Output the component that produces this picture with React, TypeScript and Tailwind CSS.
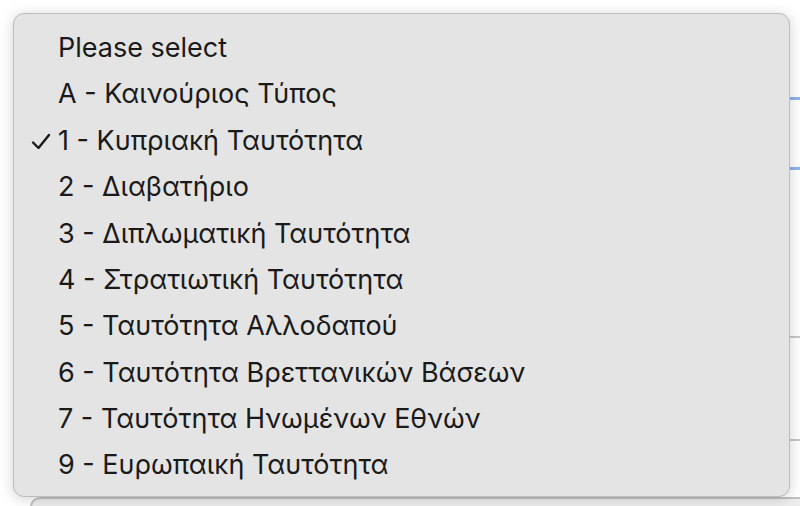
import React from "react";

const items = [
  "Please select",
  "A - Καινούριος Τύπος",
  "1 - Κυπριακή Ταυτότητα",
  "2 - Διαβατήριο",
  "3 - Διπλωματική Ταυτότητα",
  "4 - Στρατιωτική Ταυτότητα",
  "5 - Ταυτότητα Αλλοδαπού",
  "6 - Ταυτότητα Βρεττανικών Βάσεων",
  "7 - Ταυτότητα Ηνωμένων Εθνών",
  "9 - Ευρωπαική Ταυτότητα",
];

export default function App() {
  return (
    <div
      className="relative w-[800px] h-[506px] overflow-hidden bg-white"
      style={{ fontFamily: "Inter, 'Noto Sans', sans-serif" }}
    >
      {/* background form */}
      <div className="flex flex-col pl-[30px] pt-[97px]">
        <div className="w-[820px] h-[73px] shrink-0 rounded-[8px] border-[3px] border-[#8fb4ec]" />
        <div className="mt-[166px] w-[820px] h-[105px] shrink-0 rounded-[8px] border-2 border-[#c8c8c8]" />
        <div className="mt-[56px] w-[820px] h-[60px] shrink-0 rounded-[10px] border-2 border-[#c2c2c2] bg-[#ededed]" />
      </div>

      {/* dropdown menu */}
      <div className="absolute left-[13px] top-[13px] w-[777px] h-[484px] rounded-[11px] border border-[#bcbcbc] bg-[#e4e4e4] shadow-[0_2px_14px_rgba(0,0,0,0.18)] pt-[11px]">
        {items.map((t, i) => (
          <div key={i} className="relative flex items-center h-[46.4px] pl-[44px] text-[27px] text-[#1a1a1a]">
            {i === 2 && (
              <svg
                className="absolute left-[17px] top-[15px]"
                width="20"
                height="17"
                viewBox="0 0 20 17"
                fill="none"
              >
                <path d="M2 9.5 L7.5 15 L18 2" stroke="#1a1a1a" strokeWidth="2.4" strokeLinecap="round" strokeLinejoin="round" />
              </svg>
            )}
            {t}
          </div>
        ))}
      </div>
    </div>
  );
}
